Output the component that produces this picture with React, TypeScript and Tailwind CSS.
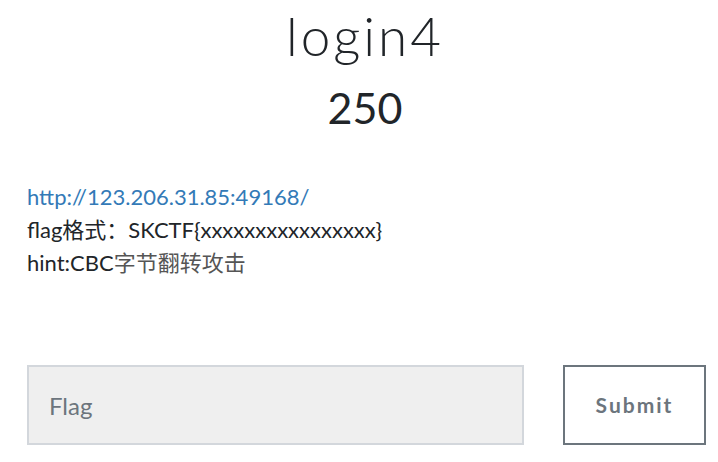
const font = { fontFamily: "Lato, 'Noto Sans CJK SC', sans-serif" };

const App = () => (
  <div className="w-[718px] h-[462px] bg-white overflow-hidden" style={font}>
    <div className="flex flex-col items-center pt-[6px] pl-[12px]">
      <h2 className="text-[53px] font-light leading-[60px] tracking-[3px] text-[#212529]">login4</h2>
      <h3 className="mt-[17px] text-[43px] leading-[50px] font-normal text-[#212529]">250</h3>
    </div>
    <div className="px-[27px] pt-[47px] text-[22px] leading-[33px] text-[#212529]">
      <a className="block text-[#337ab7]" href="#">
        http://123.206.31.85:49168/
      </a>
      <p>flag格式：SKCTF{"{"}xxxxxxxxxxxxxxxx{"}"}</p>
      <p>
        hint:CBC<span className="text-[#555]">字节翻转攻击</span>
      </p>
    </div>
    <div className="flex items-center pl-[27px] pt-[86px] gap-[39px]">
      <input
        className="w-[497px] h-[80px] shrink-0 bg-[#efefef] border-2 border-[#d3d7dc] px-[20px] text-[24px] text-[#6c757d] placeholder:text-[#6c757d] outline-none"
        placeholder="Flag"
        style={font}
      />
      <button className="w-[143px] h-[80px] shrink-0 border-2 border-[#6c757d] bg-white text-[21px] font-bold tracking-[2px] text-[#6c757d]">
        Submit
      </button>
    </div>
  </div>
);

export default App;
